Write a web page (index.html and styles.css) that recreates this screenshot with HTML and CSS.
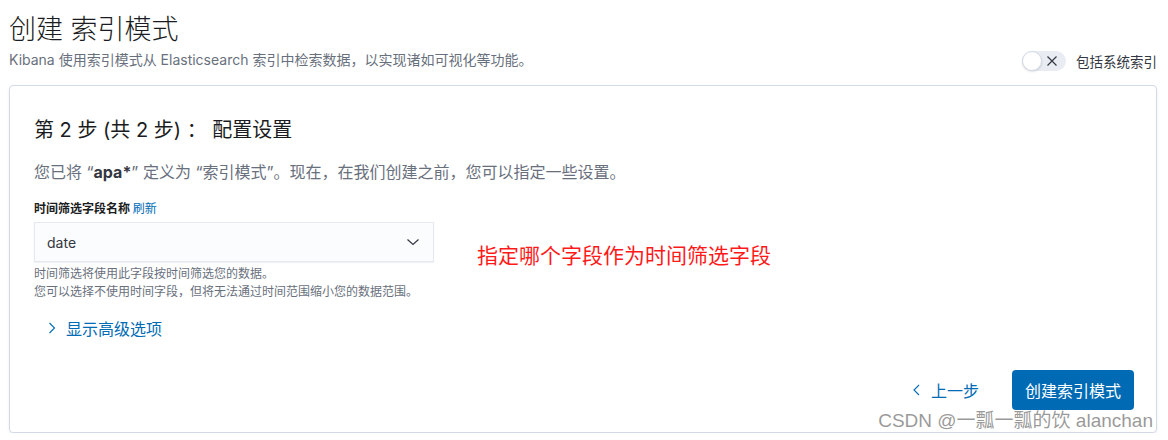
FILE: index.html
```html
<!DOCTYPE html>
<html lang="zh">
<head>
<meta charset="utf-8">
<link rel="stylesheet" href="styles.css">
</head>
<body>
<div class="page">
  <header class="header">
    <div class="header-text">
      <h1 class="title">创建 索引模式</h1>
      <p class="subtitle">Kibana 使用索引模式从 Elasticsearch 索引中检索数据，以实现诸如可视化等功能。</p>
    </div>
    <div class="toggle-wrap">
      <span class="toggle">
        <span class="knob"></span>
        <svg class="toggle-x" width="12" height="12" viewBox="0 0 12 12"><path d="M1.5 1.5 L10.5 10.5 M10.5 1.5 L1.5 10.5" stroke="#343741" stroke-width="1.2" fill="none"/></svg>
      </span>
      <span class="toggle-label">包括系统索引</span>
    </div>
  </header>

  <section class="panel">
    <h2 class="step-title">第 2 步 (共 2 步) ： 配置设置</h2>
    <p class="desc">您已将 “<b>apa*</b>” 定义为 “索引模式”。现在，在我们创建之前，您可以指定一些设置。</p>

    <div class="field-row">
      <div class="field">
        <div class="label">时间筛选字段名称 <a class="refresh">刷新</a></div>
        <div class="select">
          <span>date</span>
          <svg width="16" height="16" viewBox="0 0 16 16"><path d="M2.5 5.5 L8 10.5 L13.5 5.5" stroke="#343741" stroke-width="1.2" fill="none"/></svg>
        </div>
        <div class="help">时间筛选将使用此字段按时间筛选您的数据。<br>您可以选择不使用时间字段，但将无法通过时间范围缩小您的数据范围。</div>
      </div>
      <div class="note">指定哪个字段作为时间筛选字段</div>
    </div>

    <div class="advanced">
      <svg width="12" height="12" viewBox="0 0 12 12"><path d="M3.5 1 L8.5 6 L3.5 11" stroke="#006bb4" stroke-width="1.1" fill="none"/></svg>
      <span>显示高级选项</span>
    </div>

    <div class="footer">
      <a class="back">
        <svg width="12" height="12" viewBox="0 0 12 12"><path d="M8 1 L3 6 L8 11" stroke="#006bb4" stroke-width="1.1" fill="none"/></svg>
        <span>上一步</span>
      </a>
      <button class="primary">创建索引模式</button>
    </div>
    <div class="watermark">CSDN @一瓢一瓢的饮 alanchan</div>
  </section>
</div>
</body>
</html>
```

FILE: styles.css
```css
html, body {
  margin: 0;
  padding: 0;
  background: #ffffff;
}
body {
  font-family: "Inter", "Noto Sans CJK SC", sans-serif;
  color: #343741;
}
.page {
  padding: 11px 11px 0 9px;
}
.header {
  display: flex;
  justify-content: space-between;
  align-items: flex-end;
}
.title {
  margin: 0;
  font-size: 27px;
  font-weight: 300;
  line-height: 38px;
  color: #1a1c21;
}
.subtitle {
  margin: 0;
  font-size: 14px;
  line-height: 22px;
  color: #69707d;
}
.toggle-wrap {
  display: flex;
  align-items: center;
  gap: 10px;
  margin-bottom: 0;
}
.toggle {
  position: relative;
  display: inline-flex;
  align-items: center;
  justify-content: flex-end;
  width: 44px;
  height: 20px;
  border-radius: 10px;
  background: #e9edf3;
  box-sizing: border-box;
  padding-right: 8px;
}
.knob {
  position: absolute;
  left: 0;
  top: 0;
  width: 20px;
  height: 20px;
  box-sizing: border-box;
  border-radius: 50%;
  background: #fff;
  border: 1px solid #d3dae6;
  box-shadow: 0 1px 2px rgba(0,0,0,0.12);
}
.toggle-label {
  font-size: 13.5px;
  color: #343741;
}
.panel {
  margin-top: 14px;
  border: 1px solid #d3dae6;
  border-radius: 4px;
  box-shadow: 0 2px 2px -1px rgba(152,162,179,0.3), 0 1px 5px -2px rgba(152,162,179,0.3);
  padding: 26px 23px 0 24px;
  height: 348px;
  box-sizing: border-box;
  position: relative;
}
.step-title {
  margin: 0;
  font-size: 20px;
  font-weight: 400;
  line-height: 36px;
  color: #1a1c21;
}
.desc {
  margin: 12px 0 0;
  font-size: 16px;
  line-height: 24px;
  color: #69707d;
}
.desc b {
  color: #343741;
  font-weight: 700;
}
.field-row {
  display: flex;
  align-items: flex-start;
  margin-top: 17px;
}
.field {
  width: 400px;
}
.label {
  font-size: 12px;
  font-weight: 700;
  color: #1a1c21;
  line-height: 16px;
}
.refresh {
  color: #006bb4;
  font-weight: 400;
}
.select {
  margin-top: 5px;
  height: 40px;
  box-sizing: border-box;
  border: 1px solid #e4e8ef;
  background: #fbfcfd;
  display: flex;
  align-items: center;
  justify-content: space-between;
  padding: 0 12px 0 12px;
  font-size: 14px;
  color: #343741;
  box-shadow: 0 1px 1px rgba(152,162,179,0.15);
}
.help {
  margin-top: 3px;
  font-size: 12px;
  line-height: 18px;
  color: #69707d;
}
.note {
  margin-left: 43px;
  margin-top: 38px;
  font-size: 21px;
  color: #ff1a1a;
}
.advanced {
  margin-top: 15px;
  margin-left: 12px;
  display: flex;
  align-items: center;
  gap: 8px;
  color: #006bb4;
  font-size: 16px;
}
.footer {
  position: absolute;
  right: 22px;
  bottom: 22px;
  display: flex;
  align-items: center;
  gap: 33px;
}
.back {
  display: flex;
  align-items: center;
  gap: 8px;
  color: #006bb4;
  font-size: 16px;
}
.primary {
  height: 40px;
  padding: 0 13px;
  border: none;
  border-radius: 4px;
  background: #006bb4;
  color: #fff;
  font-family: inherit;
  font-size: 16px;
  min-width: 122px;
}
.watermark {
  position: absolute;
  right: 3px;
  bottom: 0px;
  font-family: "Liberation Sans", "Noto Sans CJK SC", sans-serif;
  font-size: 19px;
  color: rgba(120,120,120,0.75);
}
```
